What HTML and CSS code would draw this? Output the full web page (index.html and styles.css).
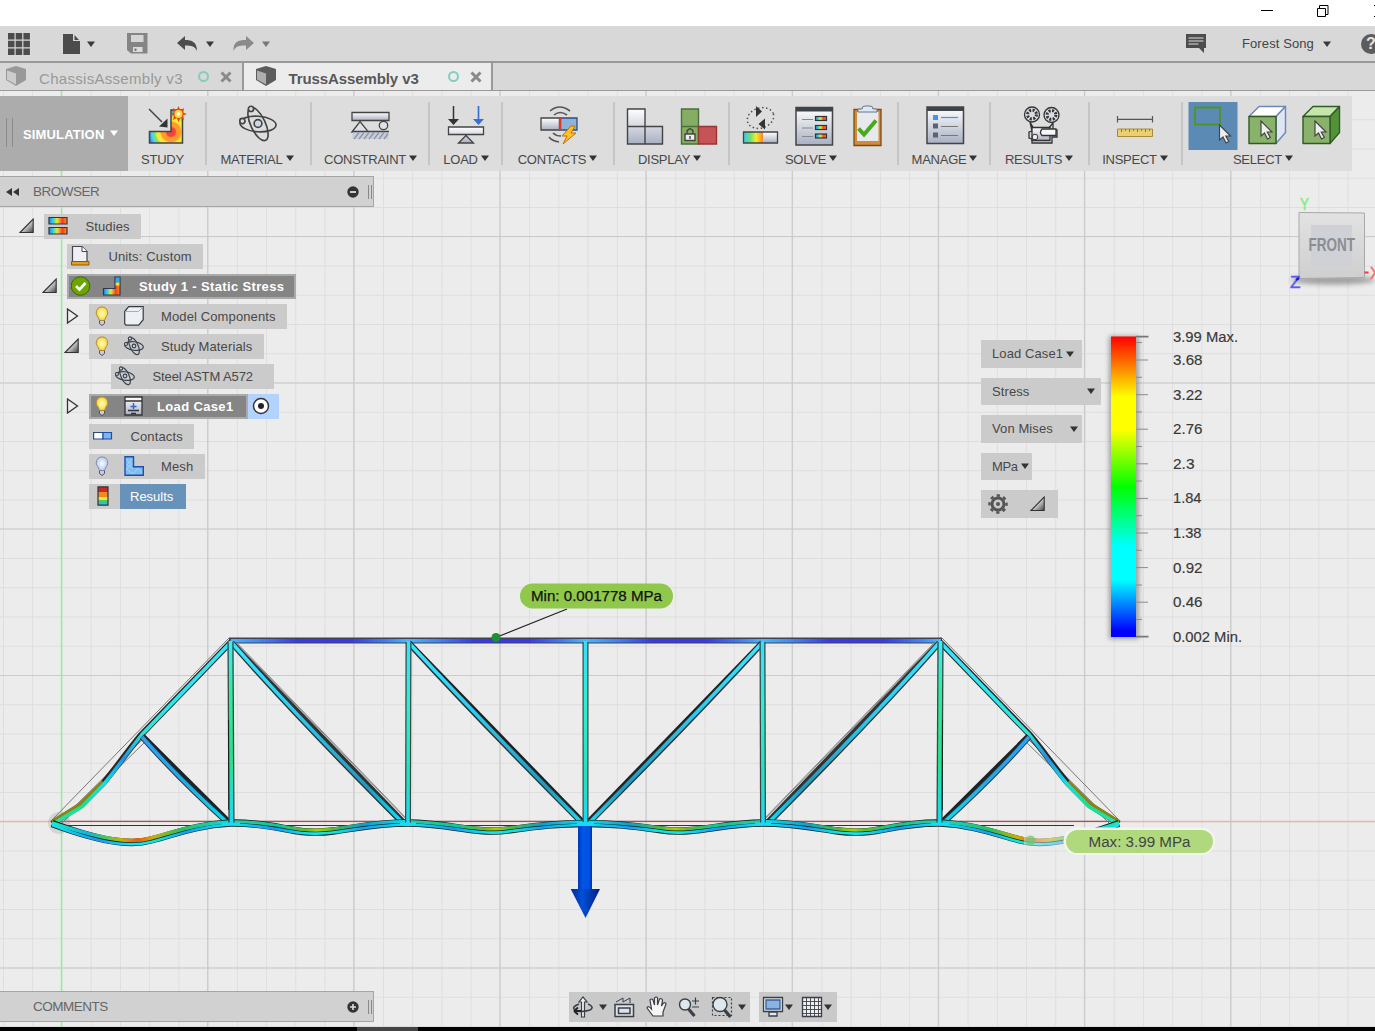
FILE: index.html
```html
<!DOCTYPE html>
<html lang="en">
<head>
<meta charset="utf-8">
<title>TrussAssembly v3</title>
<link rel="stylesheet" href="styles.css">
</head>
<body>
<svg class="defs" width="0" height="0">
  <defs>
    <linearGradient id="metal" x1="0" y1="0" x2="0" y2="1"><stop offset="0" stop-color="#fff"/><stop offset="1" stop-color="#a9b0c2"/></linearGradient>
    <linearGradient id="rainbow"><stop offset="0" stop-color="#28f"/><stop offset=".25" stop-color="#3fd8c0"/><stop offset=".45" stop-color="#e8e832"/><stop offset=".75" stop-color="#f53c28"/><stop offset="1" stop-color="#f90"/></linearGradient>
    <linearGradient id="spectrum"><stop offset="0" stop-color="#38c8f8"/><stop offset=".35" stop-color="#70e070"/><stop offset=".65" stop-color="#f4ec30"/><stop offset="1" stop-color="#ff8020"/></linearGradient>
    <linearGradient id="tri" x1="0" y1="0" x2="1" y2="1"><stop offset=".4" stop-color="#eee"/><stop offset="1" stop-color="#444"/></linearGradient>
    <radialGradient id="heat" gradientUnits="userSpaceOnUse" cx="170" cy="132" r="24"><stop offset=".18" stop-color="#f5433c"/><stop offset=".24" stop-color="#ff9a2c"/><stop offset=".4" stop-color="#ff9a2c"/><stop offset=".46" stop-color="#ffe033"/><stop offset=".58" stop-color="#f4ee30"/><stop offset=".68" stop-color="#7fe070"/><stop offset=".8" stop-color="#45d8f0"/><stop offset=".95" stop-color="#3c78f0"/></radialGradient>
    <radialGradient id="bulbOn"><stop offset="0" stop-color="#fffbd0"/><stop offset=".6" stop-color="#ffea68"/><stop offset="1" stop-color="#f0c838"/></radialGradient>
    <radialGradient id="bulbOff"><stop offset="0" stop-color="#fff"/><stop offset="1" stop-color="#b4c8ee"/></radialGradient>
    <symbol id="caret" viewBox="0 0 10 8"><path d="M1 1.5h8L5 7z" fill="currentColor"/></symbol>
    <symbol id="open" viewBox="0 0 16 16"><path d="M1 14.5L14.2 1v13.5z" fill="url(#tri)" stroke="#333" stroke-width="1.1"/></symbol>
    <symbol id="closed" viewBox="0 0 16 16"><path d="M3.5 1v14L13.500 8z" fill="#eee" stroke="#333" stroke-width="1.300"/></symbol>
    <symbol id="bulb" viewBox="0 0 20 20"><path d="M6.500 14.500h5v3l-2.500 2-2.500-2z" fill="#ccd" stroke="#445" stroke-width=".9"/><path d="M9 .800a5.900 5.900 0 0 1 4 10.200L11.500 14.500h-5L5 11A5.900 5.900 0 0 1 9 .800z" fill="url(#bulbOn)" stroke="#a88a3c" stroke-width=".9"/></symbol>
    <symbol id="bulb-off" viewBox="0 0 20 20"><path d="M6.500 14.500h5v3l-2.500 2-2.500-2z" fill="#ccd" stroke="#445" stroke-width=".9"/><path d="M9 .800a5.900 5.900 0 0 1 4 10.200L11.500 14.500h-5L5 11A5.900 5.900 0 0 1 9 .800z" fill="url(#bulbOff)" stroke="#7888b0" stroke-width=".9"/></symbol>
    <symbol id="atom" viewBox="0 0 40 40"><g fill="none" stroke="#444" stroke-width="1.700"><ellipse cx="20" cy="20" rx="18.500" ry="8" transform="rotate(4 20 20)"/><ellipse cx="20" cy="20" rx="18.500" ry="7.500" transform="rotate(65 20 20)"/><circle cx="20" cy="19.500" r="4" fill="#cfd6e4"/><circle cx="12.800" cy="4.500" r="2.700" fill="#ddd"/><circle cx="4" cy="17" r="2.700" fill="#ddd"/></g></symbol>
    <symbol id="atom-small" viewBox="0 0 20 20"><g fill="none" stroke="#3a4350" stroke-width="1.200"><ellipse cx="10" cy="10" rx="9.400" ry="4.300" transform="rotate(8 10 10)"/><ellipse cx="10" cy="10" rx="9.400" ry="4" transform="rotate(65 10 10)"/><circle cx="10" cy="10" r="1.800"/><circle cx="6" cy="2.500" r="1.600" fill="#ddd"/><circle cx="2" cy="8" r="1.500" fill="#ddd"/></g></symbol>
    <symbol id="cursor" viewBox="0 0 14 20"><path d="M1 1v15l3.500-3 3 6 2.800-1.500-3-5.500H12z" fill="#eee" stroke="#444" stroke-width="1.200"/></symbol>
    <symbol id="part" viewBox="0 0 20 20"><path d="M0 3L10 0l10 3v11l-10 6L0 14z" fill="currentColor"/><path d="M1 4.500l9 3v11l-9-5z" fill="#fff" opacity=".5"/></symbol>
    <symbol id="cross" viewBox="0 0 12 12"><path d="M1.500 1.500l9 9m0-9l-9 9" stroke="#8a8a8a" stroke-width="3"/></symbol>
  </defs>
</svg>

<div class="app">
  <header class="titlebar">
    <svg width="120" height="26" viewBox="1255 0 120 26" fill="none" stroke="#000"><path d="M1261 10.500h12M1317.500 8.500h8v8h-8zM1319.500 8V5.500h8.500v9h-2M1374.500 5v1M1374.500 16v1"/></svg>
  </header>

  <div class="quickbar">
    <svg width="22" height="22" viewBox="0 0 22 22" fill="#4c4c4c"><path d="M0 0h6.500v6.500H0zM7.700 0h6.500v6.500H7.700zM15.400 0h6.500v6.500h-6.500zM0 7.700h6.500v6.500H0zM7.700 7.700h6.500v6.500H7.700zM15.400 7.700h6.500v6.500h-6.500zM0 15.400h6.500v6.500H0zM7.700 15.400h6.500v6.500H7.700zM15.400 15.400h6.500v6.500h-6.500z"/></svg>
    <svg class="qb-file" width="17" height="20" viewBox="0 0 17 20" fill="#4c4c4c"><path d="M0 0h10v7h7v13H0z"/><path d="M11.500 1v5H16z"/></svg>
    <svg class="qb-caret" width="10" height="8"><use href="#caret"/></svg>
    <svg class="qb-save" width="21" height="21" viewBox="0 0 21 21"><path d="M0 0h20.500v20.500H4L0 17z" fill="#858585"/><path d="M4 2h12.500v7H4z" fill="#d5d5d5"/><path d="M6 14h9.500v5H6z" fill="#ddd"/><path d="M7.500 15.500h2v2.500h-2z" fill="#777"/></svg>
    <svg class="qb-undo" width="21" height="16" viewBox="0 0 21 16"><path d="M0 7l8-7v4c7 0 12 2 12 11-2-4.500-5-5.500-12-5.500V14z" fill="#4c4c4c"/></svg>
    <svg class="qb-caret" width="10" height="8"><use href="#caret"/></svg>
    <svg class="qb-redo" width="21" height="16" viewBox="0 0 21 16"><path d="M21 7l-8-7v4C5 4 0 6 .500 15c2-4.500 5-5.500 12.500-5.500V14z" fill="#8a8a8a"/></svg>
    <svg class="qb-caret dim" width="10" height="8"><use href="#caret"/></svg>
    <svg class="qb-chat" width="20" height="19" viewBox="0 0 20 19"><path d="M0 0h20v14h-2v5l-5-5H0z" fill="#4c4c4c"/><path d="M2.500 4h15M2.500 7h15M2.500 10h10" stroke="#ddd"/></svg>
    <span class="user">Forest Song</span>
    <svg class="qb-caret" width="10" height="8"><use href="#caret"/></svg>
    <span class="help">?</span>
  </div>

  <nav class="tabs">
    <div class="tab">
      <svg class="tab-part" width="20" height="20"><use href="#part"/></svg><span class="tab-name">ChassisAssembly v3</span><i class="ring"></i><svg width="12" height="12"><use href="#cross"/></svg>
    </div>
    <div class="tab active">
      <svg class="tab-part" width="20" height="20"><use href="#part"/></svg><span class="tab-name">TrussAssembly v3</span><i class="ring"></i><svg width="12" height="12"><use href="#cross"/></svg>
    </div>
  </nav>

  <main class="stage">
    <svg class="scene" width="1375" height="936" viewBox="0 91 1375 936">
      <defs>
        <pattern id="minor" patternUnits="userSpaceOnUse" x="3" y="90" width="29.230" height="29.250"><path d="M.5 0v30M0 .5h30" stroke="#dedede" fill="none"/></pattern>
        <linearGradient id="chord" gradientUnits="userSpaceOnUse" x1="230" y1="0" x2="407.500" y2="0" spreadMethod="repeat"><stop offset="0" stop-color="#48b8ff"/><stop offset=".15" stop-color="#418cf8"/><stop offset=".38" stop-color="#3838ee"/><stop offset=".68" stop-color="#3838ee"/><stop offset=".9" stop-color="#4088f8"/><stop offset="1" stop-color="#48b8ff"/></linearGradient>
        <linearGradient id="post" gradientUnits="userSpaceOnUse" x1="0" y1="640" x2="0" y2="824"><stop offset="0" stop-color="#35dfff"/><stop offset=".35" stop-color="#2cf0d0"/><stop offset=".75" stop-color="#25e0c0"/><stop offset="1" stop-color="#18dcf8"/></linearGradient>
        <linearGradient id="postEnd" gradientUnits="userSpaceOnUse" x1="0" y1="640" x2="0" y2="824"><stop offset="0" stop-color="#35efff"/><stop offset=".3" stop-color="#2aef98"/><stop offset=".65" stop-color="#2be090"/><stop offset="1" stop-color="#18dcf8"/></linearGradient>
        <linearGradient id="diag" gradientUnits="userSpaceOnUse" x1="0" y1="640" x2="0" y2="824"><stop offset="0" stop-color="#3ae8ff"/><stop offset=".4" stop-color="#2fc9ee"/><stop offset=".8" stop-color="#2597b8"/><stop offset="1" stop-color="#14e0f8"/></linearGradient>
        <linearGradient id="rafter" gradientUnits="userSpaceOnUse" x1="0" y1="640" x2="0" y2="824"><stop offset="0" stop-color="#35e4ff"/><stop offset=".5" stop-color="#27e8dc"/><stop offset=".64" stop-color="#2490e0"/><stop offset=".78" stop-color="#10e0e8"/><stop offset=".9" stop-color="#1ade90"/><stop offset="1" stop-color="#20e8b0"/></linearGradient>
        <linearGradient id="brace" gradientUnits="userSpaceOnUse" x1="0" y1="736" x2="0" y2="824"><stop offset="0" stop-color="#2fa0f8"/><stop offset=".5" stop-color="#23a7e8"/><stop offset="1" stop-color="#14d9e8"/></linearGradient>
        <linearGradient id="hot" gradientUnits="userSpaceOnUse" x1="52" y1="0" x2="230" y2="0"><stop offset="0" stop-color="#20e8c0"/><stop offset=".2" stop-color="#10b8d8"/><stop offset=".3" stop-color="#40c860"/><stop offset=".39" stop-color="#c8b000"/><stop offset=".48" stop-color="#f05a10"/><stop offset=".57" stop-color="#c8b000"/><stop offset=".72" stop-color="#28c060"/><stop offset="1" stop-color="#10d8d0"/></linearGradient>
        <linearGradient id="warm" gradientUnits="userSpaceOnUse" x1="230" y1="0" x2="407.500" y2="0" spreadMethod="repeat"><stop offset="0" stop-color="#30c8a0"/><stop offset=".28" stop-color="#10c890"/><stop offset=".42" stop-color="#60b830"/><stop offset=".5" stop-color="#a8d000"/><stop offset=".58" stop-color="#50b840"/><stop offset=".75" stop-color="#10a0c8"/><stop offset="1" stop-color="#18d8e8"/></linearGradient>
        <linearGradient id="cool" gradientUnits="userSpaceOnUse" x1="52" y1="0" x2="230" y2="0" spreadMethod="repeat"><stop offset="0" stop-color="#10e8f0"/><stop offset=".25" stop-color="#1898f0"/><stop offset=".45" stop-color="#10e8f0"/><stop offset=".6" stop-color="#10e0e0"/><stop offset=".75" stop-color="#18a0f0"/><stop offset="1" stop-color="#10e0f0"/></linearGradient>
        <linearGradient id="scale" x1="0" y1="0" x2="0" y2="1"><stop offset="0" stop-color="#f00"/><stop offset=".2" stop-color="#ff0"/><stop offset=".31" stop-color="#ff0"/><stop offset=".5" stop-color="#0f0"/><stop offset=".7" stop-color="#0ff"/><stop offset=".81" stop-color="#0ff"/><stop offset=".98" stop-color="#00f"/></linearGradient>
        <linearGradient id="shaft"><stop offset="0" stop-color="#0038b8"/><stop offset=".35" stop-color="#0058e8"/><stop offset=".8" stop-color="#0050e0"/><stop offset="1" stop-color="#0030a8"/></linearGradient>
        <linearGradient id="head"><stop offset="0" stop-color="#002c98"/><stop offset=".4" stop-color="#0050d8"/><stop offset="1" stop-color="#001c80"/></linearGradient>
        <linearGradient id="cubeFace" x1="0" y1="0" x2="0" y2="1"><stop offset="0" stop-color="#e2e2e3"/><stop offset="1" stop-color="#cfcfcf"/></linearGradient>
        <filter id="soft" x="-50%" y="-50%" width="200%" height="200%"><feGaussianBlur stdDeviation="2.500"/></filter>
      </defs>
      <rect y="91" width="1375" height="936" fill="#ececec"/>
      <rect y="91" width="1375" height="936" fill="url(#minor)"/>
      <path d="M207.700 91v936M353.800 91v936M500 91v936M646 91v936M792.200 91v936M938.400 91v936M1084.500 91v936M1230.700 91v936M0 236.500h1375M0 383h1375M0 529h1375M0 675.500h1375M0 968h1375" stroke="#cacaca" stroke-width="1.200" fill="none"/>
      <path d="M61.500 91v936" stroke="#92f292" stroke-width="1.500"/>
      <path d="M0 821.500h1375" stroke="#f2b0b0" stroke-width="1.500"/>

      <g fill="none">
        <path d="M55 821.300h1062" stroke="#806464" stroke-width="1.300"/>
        <path d="M55 825.500h1019" stroke="#333"/>
        <circle cx="59" cy="823" r="11" fill="#999" opacity=".28"/><circle cx="62" cy="822" r="8" fill="#999" opacity=".2"/>
        <path d="M229 640.500h713" stroke="#3f4450" stroke-width="6"/>
        <path d="M231 640.700h710" stroke="url(#chord)" stroke-width="3.600"/>
        <g id="half">
          <path d="M51 821L229 638M57 824l87-86M61 824l86-84" stroke="#777"/>
          <path d="M234 641l174 180M238 644l170 176" stroke="#888"/>
          <path d="M231.500 641.500L141 735C127 752 116 768 103 783.500L81 805.500 52 823.500" stroke="#262626" stroke-width="6"/>
          <path d="M103 782L80 804.500 52 822" stroke="#8a8418" stroke-width="4"/>
          <path d="M231.500 641.500L141.500 735C128 752 117 768 104 784L82 806.500 53 824" stroke="url(#rafter)" stroke-width="3.600"/>
          <path d="M142.500 736l86.500 86" stroke="#1d2228" stroke-width="5.400"/>
          <path d="M142 737q38 43 87 87" stroke="#20383e" stroke-width="5.500"/>
          <path d="M142 737q37 42 87 87" stroke="url(#brace)" stroke-width="3.500"/>
          <path d="M232 642.500L405 823" stroke="#333" stroke-width="4.600"/>
          <path d="M232 643.500Q300 720.500 404 824.500" stroke="#243338" stroke-width="5.600"/>
          <path d="M232 643Q300 720 404 824" stroke="url(#diag)" stroke-width="3.500"/>
          <path d="M409 642.500L584 823" stroke="#202020" stroke-width="5"/>
          <path d="M409 643.500Q485 726 583 824" stroke="#243338" stroke-width="5.600"/>
          <path d="M409 643Q485.500 725.500 583 824" stroke="url(#diag)" stroke-width="3.500"/>
          <path d="M52 823.500C75 832 96 839 118 841.500Q137 844 151 840C175 834 195 825 230 823C260 822 283 829 302 831.500Q318 833 333 831C356 828 377 823 408 823C438 823 460 829 480 830.500Q497 832 512 829.500C538 826 556 823.500 585.500 823.500" stroke="#122426" stroke-width="7.400"/>
          <path d="M52 823C75 830 96 837 118 839.500Q137 842 151 838C175 832 195 823 230 822" stroke="url(#hot)" stroke-width="3.600"/>
          <path d="M230 822C260 820.500 283 827 302 829.500Q318 831 333 829C356 826 377 821 408 821.500C438 822 460 827 480 828.500Q497 830 512 827.500C538 824 556 822 585.500 822" stroke="url(#warm)" stroke-width="3"/>
          <path d="M52 825C75 834 96 841 118 843.500Q137 845.500 151 842C175 836 195 827 230 824.500C260 824 283 831 302 833Q318 834.500 333 832.500C356 829.500 377 825 408 824.500C438 825 460 830.500 480 832Q497 833.500 512 831C538 828 556 825 585.500 825" stroke="url(#cool)" stroke-width="2.700"/>
          <path d="M230.500 642L231.500 824" stroke="#3a4545" stroke-width="6.200"/><path d="M228.800 720v90" stroke="#111"/>
          <path d="M230.500 641L231.500 825" stroke="url(#postEnd)" stroke-width="3.600"/>
          <path d="M408.500 642l-.5 182" stroke="#3a4545" stroke-width="6"/>
          <path d="M408.500 641l-.5 184" stroke="url(#post)" stroke-width="3.500"/>
          <path d="M222 824h18M400 824h16" stroke="#14dcf4" stroke-width="3"/>
        </g>
        <use href="#half" transform="translate(1171 0) scale(-1 1)"/>
        <path d="M585.500 642v182" stroke="#3a4545" stroke-width="6"/>
        <path d="M585.500 641v185" stroke="url(#post)" stroke-width="3.600"/>
        <path d="M577 824h17" stroke="#14dcf4" stroke-width="4"/>
      </g>
      <path d="M578 826h14v63h-14z" fill="url(#shaft)"/>
      <path d="M570.700 889h29.300L585.500 918z" fill="url(#head)"/>
      <path d="M497 637l70-28" stroke="#222" stroke-width="1.200"/>
      <circle cx="496" cy="637.500" r="4.500" fill="#1d8f35"/>
      <rect x="520" y="583.500" width="153" height="25" rx="12.500" fill="#8fc84a"/>
      <text x="531" y="601" font-size="15.500" textLength="131" lengthAdjust="spacingAndGlyphs" fill="#111" stroke="#111" stroke-width=".25">Min: 0.001778 MPa</text>
      <path d="M1024 834h48v14h-48z" fill="#ececec" opacity=".45"/>
      <circle cx="1030.500" cy="840.500" r="5" fill="#6cc46c" opacity=".7"/>
      <rect x="1063.500" y="827.500" width="151.500" height="27.500" rx="13.500" fill="#f3f6ef"/>
      <rect x="1066" y="830" width="147" height="23" rx="11.500" fill="#b0d97d"/>
      <text x="1088.500" y="847" font-size="15.500" textLength="102" lengthAdjust="spacingAndGlyphs" fill="#444">Max: 3.99 MPa</text>

      <rect x="1109" y="336" width="30" height="303" fill="#777" opacity=".65" filter="url(#soft)"/>
      <rect x="1111" y="336.500" width="25" height="300.500" fill="url(#scale)"/>
      <path d="M1136 336.700h12.500M1136 636.700h12.500" stroke="#777" stroke-width="1.800"/>
      <path d="M1136 360h12M1136 394.700h12M1136 429.200h12M1136 463.800h12M1136 498.400h12M1136 533h12M1136 567.600h12M1136 602.200h12M1136 342.500h6M1136 377.300h6M1136 412h6M1136 446.500h6M1136 481h6M1136 515.700h6M1136 550.300h6M1136 585h6M1136 619.500h6" stroke="#8c8c8c"/>
      <g font-size="14.800" fill="#383838" stroke="#383838" stroke-width=".15">
        <text x="1173" y="342" textLength="65" lengthAdjust="spacingAndGlyphs">3.99 Max.</text><text x="1173" y="365.200" textLength="29.500" lengthAdjust="spacingAndGlyphs">3.68</text><text x="1173" y="399.600" textLength="29.500" lengthAdjust="spacingAndGlyphs">3.22</text><text x="1173" y="434.200" textLength="29.500" lengthAdjust="spacingAndGlyphs">2.76</text><text x="1173" y="468.800" textLength="21.500" lengthAdjust="spacingAndGlyphs">2.3</text><text x="1173" y="503.400" textLength="28.500" lengthAdjust="spacingAndGlyphs">1.84</text><text x="1173" y="538" textLength="28.500" lengthAdjust="spacingAndGlyphs">1.38</text><text x="1173" y="572.600" textLength="29.500" lengthAdjust="spacingAndGlyphs">0.92</text><text x="1173" y="607.200" textLength="29.500" lengthAdjust="spacingAndGlyphs">0.46</text><text x="1173" y="641.800" textLength="69" lengthAdjust="spacingAndGlyphs">0.002 Min.</text>
      </g>

      <ellipse cx="1333" cy="280" rx="42" ry="4.500" fill="#777" opacity=".65" filter="url(#soft)"/>
      <path d="M1299 212.500l65.500.500v64.500l-65.500 1z" fill="url(#cubeFace)" stroke="#a9a9ab"/>
      <path d="M1311 225h41v41h-41z" fill="#cfd1d6"/>
      <text x="1308.500" y="251.300" font-size="17.500" font-weight="bold" textLength="46.500" lengthAdjust="spacingAndGlyphs" fill="#8a8d93">FRONT</text>
      <g font-size="17" stroke-width=".5">
        <text x="1300" y="209.500" textLength="9" lengthAdjust="spacingAndGlyphs" fill="#80f080" stroke="#80f080">Y</text>
        <text x="1290" y="288" textLength="10.500" lengthAdjust="spacingAndGlyphs" fill="#5c5cf0" stroke="#5c5cf0">Z</text>
        <text x="1370" y="279" textLength="10" lengthAdjust="spacingAndGlyphs" fill="#ff6a6a" stroke="#ff6a6a">X</text>
      </g>
      <path d="M1296 280l3-2" stroke="#22c" stroke-width="2.500"/>
      <path d="M1364.500 272.500h4" stroke="#f33" stroke-width="2"/>
    </svg>

    <div class="ui">
      <div class="toolbar">
        <div class="workspace"><i class="grip"></i><span>SIMULATION</span><svg width="10" height="8"><use href="#caret"/></svg></div>

        <div class="group study">
          <svg width="46" height="48" viewBox="143 102 46 48"><path d="M148.500 131.500H170V110h11.500v33h-33z" fill="url(#heat)" stroke="#444" stroke-width="1.500"/><path d="M148 109l13 13" stroke="#444" stroke-width="1.500"/><path d="M166.500 127.500v-9l-8.500 8z" fill="#333"/><path d="M177.500 106l1.800 4 4-2-1.500 4.300 4 1.700-4 1.700 1.500 4.300-4-2-1.800 4-1.800-4-4 2 1.500-4.300-4-1.700 4-1.700-1.500-4.300 4 2z" fill="#e84a10"/><circle cx="177.500" cy="114" r="4" fill="#ffd93c"/><circle cx="177.500" cy="114" r="1.800" fill="#fff"/></svg>
          <span class="label">STUDY</span>
        </div>
        <div class="group material">
          <svg width="44" height="48" viewBox="-1 -1 44 48"><use href="#atom" x="1.500" y="1.500" width="39" height="39"/></svg>
          <span class="label">MATERIAL<svg width="10" height="8"><use href="#caret"/></svg></span>
        </div>
        <div class="group constraint">
          <svg width="46" height="48" viewBox="348 102 46 48" stroke="#444" stroke-width="1.300"><path d="M352 112.500h37v8h-37z" fill="url(#metal)"/><path d="M352 132l8-10.500 8.500 10.500z" fill="#dce0e8"/><circle cx="383.500" cy="125.500" r="4.200" fill="#dce0e8"/><path d="M352.500 132h36v7h-36z" fill="#c9cedb" stroke="none"/><path d="M352 131.500h37" /><path d="M354 139l5-6.500M359 139l5-6.500M364 139l5-6.500M369 139l5-6.500M374 139l5-6.500M379 139l5-6.500M384 139l4-5.500" stroke="#8f95a3"/></svg>
          <span class="label">CONSTRAINT<svg width="10" height="8"><use href="#caret"/></svg></span>
        </div>
        <div class="group load">
          <svg width="46" height="48" viewBox="444 102 46 48"><path d="M453.500 106v14" stroke="#333" stroke-width="1.500"/><path d="M448 119h11l-5.500 6z" fill="#333"/><path d="M478.500 106v14" stroke="#3a6fd0" stroke-width="1.700"/><path d="M473 119h11l-5.500 6z" fill="#3a6fd0"/><path d="M448.500 127h35v7.500h-35zM466 135.500l7.500 7.500h-15z" fill="url(#metal)" stroke="#444" stroke-width="1.300"/></svg>
          <span class="label">LOAD<svg width="10" height="8"><use href="#caret"/></svg></span>
        </div>
        <div class="group contacts">
          <svg width="46" height="48" viewBox="535 102 46 48" fill="none"><g stroke="#555" stroke-width="1.600"><path d="M550 111q9.500-8 20 0M554 115q6-5 13 0M549 137q3 4 10 5M553 133q3 3 8 3"/></g><path d="M541 118h18.500v12H541z" fill="url(#metal)" stroke="#444" stroke-width="1.300"/><path d="M560.500 118H577v12h-16.500z" fill="#8fb2dc" stroke="#2c4f80" stroke-width="1.300"/><path d="M560 118v12" stroke="#d83a20" stroke-width="2.200"/><path d="M571 126l-9 10h5l-4 8 13-11h-5l4-7z" fill="#ffc02a" stroke="#c07000"/></svg>
          <span class="label">CONTACTS<svg width="10" height="8"><use href="#caret"/></svg></span>
        </div>
        <div class="group display">
          <svg width="96" height="48" viewBox="624 102 96 48" stroke-width="1.400"><path d="M627.500 109h17.500v17.500h-17.500zM627.500 126.500h17.500V144h-17.500zM645 126.500h17.500V144H645z" fill="url(#metal)" stroke="#444"/><path d="M681.500 109h17v17.500h-17zM681.500 126.500h17V144h-17z" fill="#86ae62" stroke="#48703a"/><path d="M698.500 126.500h18V144h-18z" fill="#c65356" stroke="#963636"/><path d="M685 134h10v6.500h-10z" fill="#eee" stroke="#444"/><path d="M687 133.500v-2.500q3-4.500 6 0v2.500M690 136v3" fill="none" stroke="#444"/></svg>
          <span class="label">DISPLAY<svg width="10" height="8"><use href="#caret"/></svg></span>
        </div>
        <div class="group solve">
          <svg width="144" height="48" viewBox="740 102 144 48"><path d="M743.500 132h34v11h-34z" fill="url(#metal)"/><path d="M743.500 132H763v11h-19.500z" fill="url(#spectrum)"/><path d="M743.500 132h34v11h-34z" fill="none" stroke="#444" stroke-width="1.300"/><ellipse cx="760.500" cy="118" rx="13.500" ry="10" transform="rotate(-18 760.500 118)" fill="none" stroke="#555" stroke-width="1.500" stroke-dasharray="1.500 2.500"/><path d="M756 106v11l6-5.500zM765 118.500v11l-6.500-5.500z" fill="#333"/>
          <path d="M796 107.500h36.500V145H796z" fill="url(#metal)" stroke="#444" stroke-width="1.500"/><path d="M796 107.500h36.500v4H796z" fill="#3f434a"/><path d="M802 119.500h11M802 128h11M802 136.500h11" stroke="#888"/><g fill="url(#rainbow)" stroke="#333" stroke-width="1.200"><rect x="815.500" y="116.500" width="11" height="4"/><rect x="815.500" y="125.500" width="11" height="4"/><rect x="815.500" y="134" width="11" height="4"/></g>
          <path d="M854 109.500h27V145.500h-27z" fill="#d08c38" stroke="#7a4c18" stroke-width="1.300"/><path d="M857 112h21.500v29H857z" fill="#e7e9ec"/><path d="M858 112v-3h4q0-3 3-3h5q3 0 3 3h4v3z" fill="#dde8f4" stroke="#63788e"/><path d="M858.500 128.500l5.500 6L876 120.500" fill="none" stroke="#45aa1c" stroke-width="4"/></svg>
          <span class="label">SOLVE<svg width="10" height="8"><use href="#caret"/></svg></span>
        </div>
        <div class="group manage">
          <svg width="46" height="48" viewBox="921 102 46 48"><path d="M926 107h36.500v36.500H926z" fill="url(#metal)" stroke="#444" stroke-width="1.500"/><path d="M926 107h36.500v4H926z" fill="#3f434a"/><path d="M932 115h5v5h-5z" fill="#4a90f0"/><path d="M932 123.500h5v5h-5zM932 132.500h5v5h-5z" fill="#5c6370"/><path d="M940 117.500h17" stroke="#4a90f0" stroke-width="1.200"/><path d="M940 126.500h17M940 135.500h17" stroke="#777" stroke-width="1.200"/></svg>
          <span class="label">MANAGE<svg width="10" height="8"><use href="#caret"/></svg></span>
        </div>
        <div class="group results">
          <svg width="46" height="48" viewBox="1018 102 46 48"><g stroke="#333" stroke-width="1.300" fill="#d8dbe2"><path d="M1029 122l4 7h14l5-6v8l4-1v7h-5v6h-20v-4l-3-1v-6l3-1z"/><circle cx="1031" cy="114.500" r="7.500"/><circle cx="1050.500" cy="115" r="7.500"/></g><circle cx="1031" cy="114.500" r="4.400" fill="none" stroke="#333" stroke-width="3" stroke-dasharray="2 1.460"/><circle cx="1050.500" cy="115" r="4.400" fill="none" stroke="#333" stroke-width="3" stroke-dasharray="2 1.460"/><path d="M1031 127.500h18v13h-18z" fill="url(#metal)" stroke="#333" stroke-width="1.300"/><path d="M1041 129h14v6.500h-14q-3-3 0-6.500z" fill="#f5f6f8" stroke="#333" stroke-width="1.300"/><circle cx="1034" cy="137" r="2.800" fill="#eee" stroke="#333"/></svg>
          <span class="label">RESULTS<svg width="10" height="8"><use href="#caret"/></svg></span>
        </div>
        <div class="group inspect">
          <svg width="46" height="48" viewBox="1113 102 46 48"><path d="M1117.500 116v6.500M1152.500 116v6.500M1117 119.300h36" stroke="#555" stroke-width="1.200"/><path d="M1117.500 129h35v7.500h-35z" fill="#ecd070" stroke="#a88940"/><path d="M1121.500 129v3M1125.500 129v2M1129.500 129v3M1133.500 129v2M1137.500 129v3M1141.500 129v2M1145.500 129v3M1149.500 129v2" stroke="#947530"/></svg>
          <span class="label">INSPECT<svg width="10" height="8"><use href="#caret"/></svg></span>
        </div>
        <div class="group select">
          <svg width="156" height="48" viewBox="1188 102 156 48"><path d="M1188.500 102h49v48h-49z" fill="#5b8bb5"/><path d="M1195 107.500h25v17h-25z" fill="none" stroke="#4f9428" stroke-width="1.800"/><use href="#cursor" x="1218.500" y="124" width="14" height="20"/>
          <g stroke-width="1.400" stroke-linejoin="round"><path d="M1249 116.500l10-10h26.500l-9.500 10z" fill="#fff" stroke="#6a87b8"/><path d="M1276 116.500l9.500-10v26l-9.500 11z" fill="#dfe5f2" stroke="#6a87b8"/><path d="M1249 116.500h27v27h-27z" fill="#89b36a" stroke="#315a26"/><path d="M1303 116.500l10-10h26.500l-9.500 10z" fill="#c4e6ab" stroke="#315a26"/><path d="M1330 116.500l9.500-10v26l-9.500 11z" fill="#529339" stroke="#315a26"/><path d="M1303 116.500h27v27h-27z" fill="#89b36a" stroke="#315a26"/></g><use href="#cursor" x="1260" y="120" width="14" height="20"/><use href="#cursor" x="1314" y="120" width="14" height="20"/></svg>
          <span class="label">SELECT<svg width="10" height="8"><use href="#caret"/></svg></span>
        </div>
      </div>

      <div class="middle">
        <aside class="browser">
          <div class="panel-head">
            <svg class="collapse" width="14" height="8" viewBox="0 0 14 8"><path d="M0 4l6-4v8zM7 4l6-4v8z" fill="#333"/></svg>
            <span>BROWSER</span>
            <svg class="badge" width="12" height="12" viewBox="0 0 12 12"><circle cx="6" cy="6" r="5.700" fill="#333"/><path d="M3 6h6" stroke="#ddd" stroke-width="1.800"/></svg><i class="handle"></i>
          </div>
          <ul class="tree">
            <li class="l0"><span class="toggle"><svg width="16" height="16"><use href="#open"/></svg></span>
              <span class="chip"><svg width="20" height="20" viewBox="0 0 20 20"><path d="M1 1.500h18v6.500H1zM1 11.500h18V18H1z" fill="url(#rainbow)" stroke="#334" stroke-width="1.200"/></svg><b>Studies</b></span></li>
            <li class="l1"><span class="toggle"></span>
              <span class="chip"><svg width="20" height="20" viewBox="0 0 20 20"><path d="M1.500.500h9.500l5 5v11h-14.500z" fill="#eef0f4" stroke="#445" stroke-width="1.200"/><path d="M11 .500v5h5" fill="#fff" stroke="#445"/><path d="M.500 15.500h17.500v3.500H.500z" fill="#e0a020" stroke="#8a5a00"/></svg><b>Units: Custom</b></span></li>
            <li class="l1"><span class="toggle"><svg width="16" height="16"><use href="#open"/></svg></span>
              <span class="chip dark"><svg width="20" height="20" viewBox="0 0 20 20"><circle cx="9.500" cy="10" r="9.300" fill="#6aa500" stroke="#3f6500"/><path d="M5 10l3.500 3.500L14.500 7" fill="none" stroke="#fff" stroke-width="2.600"/></svg><svg width="20" height="20" viewBox="0 0 20 20"><path d="M1.500 12.500H13V1h5v18H1.500z" fill="url(#rainbow)" stroke="#335" stroke-width="1.200"/><path d="M13.600 1.600h3.800v5h-3.800z" fill="#28a8f0"/><path d="M13.600 6.600h3.800v3h-3.800z" fill="#e8e040"/></svg><b>Study 1 - Static Stress</b></span></li>
            <li class="l2"><span class="toggle"><svg width="16" height="16"><use href="#closed"/></svg></span>
              <span class="chip"><svg width="20" height="20"><use href="#bulb"/></svg><svg width="20" height="20" viewBox="0 0 20 20"><path d="M.700 5.500l4-4.800h14.500v13l-4.500 5.500H2l-1.300-1.500z" fill="#eef0f4" stroke="#333c48" stroke-width="1.200"/><path d="M1 5.500h13.500L19 1" fill="none" stroke="#aab"/></svg><b>Model Components</b></span></li>
            <li class="l2"><span class="toggle"><svg width="16" height="16"><use href="#open"/></svg></span>
              <span class="chip"><svg width="20" height="20"><use href="#bulb"/></svg><svg width="20" height="20"><use href="#atom-small"/></svg><b>Study Materials</b></span></li>
            <li class="l3"><span class="toggle"></span>
              <span class="chip material-chip"><svg width="20" height="20"><use href="#atom-small"/></svg><b>Steel ASTM A572</b></span></li>
            <li class="l2"><span class="toggle"><svg width="16" height="16"><use href="#closed"/></svg></span>
              <span class="chip dark case"><svg width="20" height="20"><use href="#bulb"/></svg><svg width="20" height="20" viewBox="0 0 20 20"><path d="M1 1h17v18H1z" fill="url(#metal)" stroke="#333" stroke-width="1.300"/><path d="M1 5h17" stroke="#333" stroke-width="1.500"/><path d="M9.500 7v6M6.500 10.500h6" stroke="#2868d0" stroke-width="1.400"/><path d="M4 14.500h11M7 17.500h5" stroke="#333" stroke-width="1.500"/></svg><b>Load Case1</b></span><span class="radio"><svg width="18" height="18" viewBox="0 0 18 18"><circle cx="9" cy="9" r="7.500" fill="#fff" stroke="#333" stroke-width="1.500"/><circle cx="9" cy="9" r="3" fill="#222"/></svg></span></li>
            <li class="l2"><span class="toggle"></span>
              <span class="chip"><svg width="20" height="20" viewBox="0 0 20 20"><path d="M.600 6.500h9.500v6.500H.600z" fill="#fff" stroke="#2a4a80" stroke-width="1.200"/><path d="M10 6.500h8.500v6.500H10z" fill="#7fb2ee" stroke="#1c4fb0" stroke-width="1.200"/></svg><b>Contacts</b></span></li>
            <li class="l2"><span class="toggle"></span>
              <span class="chip"><svg width="20" height="20"><use href="#bulb-off"/></svg><svg width="20" height="20" viewBox="0 0 20 20"><path d="M1 .700h8.500v10h9.800v8.500H1z" fill="#7fbcf0" stroke="#1c4fb0" stroke-width="1.400"/><path d="M2 3l6 5-6 5 7 5 5-6 4 5M8 3L3 9l6 4" fill="none" stroke="#a9d3f6"/></svg><b>Mesh</b></span></li>
            <li class="l2"><span class="toggle"></span>
              <span class="chip result-icon"><svg width="20" height="20" viewBox="0 0 20 20"><path d="M5 1h10v5H5z" fill="#c82828"/><path d="M5 6h10v5H5z" fill="#ee8a20"/><path d="M5 11h10v3H5z" fill="#e8e838"/><path d="M5 14h10v3H5z" fill="#40d060"/><path d="M5 16.500h10V19H5z" fill="#30b8f0"/><path d="M5 .800h10v18.400H5z" fill="none" stroke="#333" stroke-width="1.200"/></svg></span><span class="chip result">Results</span></li>
          </ul>
        </aside>

        <div class="plot-controls">
          <button class="w101">Load Case1<svg width="10" height="8"><use href="#caret"/></svg></button>
          <button class="w120">Stress<svg width="10" height="8"><use href="#caret"/></svg></button>
          <button class="w101">Von Mises<svg width="10" height="8"><use href="#caret"/></svg></button>
          <button class="w51">MPa<svg width="10" height="8"><use href="#caret"/></svg></button>
          <div class="plot-tools"><svg width="20" height="20" viewBox="0 0 20 20"><circle cx="10" cy="10" r="6" fill="none" stroke="#555" stroke-width="3"/><circle cx="10" cy="10" r="8.500" fill="none" stroke="#555" stroke-width="2.500" stroke-dasharray="3.300 3.376" stroke-dashoffset="1.600"/><circle cx="10" cy="10" r="2" fill="#555"/></svg><svg width="16" height="16"><use href="#open"/></svg></div>
        </div>
      </div>

      <div class="bottom">
        <div class="panel-head comments"><span>COMMENTS</span><svg class="badge" width="12" height="12" viewBox="0 0 12 12"><circle cx="6" cy="6" r="5.700" fill="#333"/><path d="M3 6h6M6 3v6" stroke="#ddd" stroke-width="1.600"/></svg><i class="handle"></i></div>
        <svg class="nav" width="181" height="30" viewBox="569 992 181 30" fill="none" stroke="#3a3f48" stroke-width="1.200"><path d="M581.500 1017v-15h-2.500l4-5 4 5H584.500v15z" fill="#eee"/><path d="M579 1004q-8 3-4 6 5 3 15 0 5-3-2-6" stroke-width="1.500"/><path d="M574 1011h7m-7 0l4-3.500m-4 3.500l4 3.500" stroke="#222" stroke-width="1.800"/><path d="M599 1004.500h8l-4 5.500z" fill="#333" stroke="none"/>
          <path d="M615 1004.500h18.500v12H615zM618.500 1008h11.500v5.500h-11.500z" fill="#dfe2e8" stroke-width="1.500"/><path d="M616 1002l7-4v4l7-4v5" stroke-width="1"/>
          <path d="M653 1016l-6-8q1-3 4.500 1l-1.500-9q2-2 3 0l1.500 5v-7q2-2 3 0v7l2-6q2-1 3 1l-1 6 2-3q2-1 2.500 1l-3 8v4z" fill="#f6f6f6"/>
          <circle cx="685" cy="1004.500" r="5.500" fill="#dce8ec" stroke-width="1.400"/><path d="M688.500 1009l6 7" stroke-width="3.200"/><path d="M692 1001h7M695.500 997.500v7M692 1007h7"/>
          <path d="M712.500 997.500h19v18h-19z" stroke-dasharray="2 2"/><circle cx="720" cy="1004.500" r="7" fill="#dce8ec" stroke-width="1.400"/><path d="M724.500 1010l6 7" stroke-width="3.200"/><path d="M738 1004.500h8l-4 5.500z" fill="#333" stroke="none"/></svg>
        <svg class="nav second" width="78" height="30" viewBox="759 992 78 30" fill="none" stroke="#3a3f48" stroke-width="1.300"><path d="M763.500 997.500h19v14h-19zM769 1012h8v4h-8z" fill="#e8e8e8"/><path d="M766 1000h14v9h-14z" fill="#8ab3e4" stroke="#35619c"/><path d="M785 1004.500h8l-4 5.500z" fill="#333" stroke="none"/><path d="M802.500 997.500h19v19h-19z" fill="#eee"/><path d="M806.500 997.500v19M810.500 997.500v19M814.500 997.500v19M818.500 997.500v19M802.500 1001.500h19M802.500 1005.500h19M802.500 1009.500h19M802.500 1013.500h19" stroke-width=".9"/><path d="M824 1004.500h8l-4 5.500z" fill="#333" stroke="none"/></svg>
      </div>
    </div>
  </main>
  <footer class="edge"><i></i></footer>
</div>
</body>
</html>
```
FILE: styles.css
```css
* { box-sizing: border-box; }
body { margin: 0; overflow: hidden; background: #fff; color: #484848; font: 13px "Liberation Sans", Arial, sans-serif; }
svg { display: block; flex: none; }
.defs { position: absolute; }
.app { display: grid; grid-template-rows: 26px 37px 28px 936px 4px; width: 1375px; height: 1031px; overflow: hidden; }
.titlebar { display: flex; justify-content: flex-end; background: #fff; }

.quickbar { display: flex; align-items: center; padding-left: 8px; background: #d8d8d8; border-bottom: 2px solid #999; white-space: nowrap; overflow: hidden; color: #3a3a3a; }
.qb-file { margin-left: 33px; }
.qb-caret { margin-left: 6px; }
.qb-save { margin-left: 31px; }
.qb-undo { margin-left: 29px; }
.qb-undo + .qb-caret, .qb-redo + .qb-caret { margin-left: 7px; }
.qb-redo { margin-left: 18px; }
.dim { color: #777; }
.qb-chat { margin-left: 915px; }
.user { flex: none; width: 80px; margin-left: 36px; font-size: 13px; letter-spacing: .1px; color: #444; }
.user + .qb-caret { margin-left: 0; }
.help { flex: none; width: 20px; height: 20px; margin-left: 29px; border-radius: 50%; background: #5c5c5c; color: #e5e5e5; font: bold 16px/20px "Liberation Sans", Arial, sans-serif; text-align: center; }

.tabs { display: flex; background: #d8d8d8; border-bottom: 1px solid #999; }
.tab { display: flex; align-items: center; width: 244px; padding-left: 6px; border-right: 2px solid #999; color: #999; font-size: 15px; letter-spacing: .3px; white-space: nowrap; }
.tab.active { width: 249px; padding-left: 12px; background: #ececec; color: #585858; font-size: 15px; font-weight: bold; letter-spacing: -.1px; }
.tab-part { color: #999; align-self: flex-start; margin-top: 3px; }
.active .tab-part { color: #5c5c5c; }
.tab-name { width: 159px; margin: 4px 0 0 13px; }
.active .tab-name { width: 159.5px; margin-left: 12.5px; }
.ring { width: 11px; height: 11px; margin-right: 11px; border: 2px solid #85cdbd; border-radius: 50%; }

.stage { display: grid; }
.scene, .ui { grid-area: 1 / 1; }
.scene { font-family: "Liberation Sans", Arial, sans-serif; }
.ui { display: flex; flex-direction: column; padding-top: 5px; }

.toolbar { display: flex; width: 1352px; height: 75px; background: #ddd; }
.workspace { display: flex; align-items: center; width: 128px; padding: 2px 0 0 6px; background: #acacac; color: #fff; font-weight: bold; font-size: 13px; letter-spacing: .15px; white-space: nowrap; }
.workspace .grip { width: 7px; height: 29px; margin: -4px 10px 0 0; border: solid #8b8b8b; border-width: 0 1.5px; }
.workspace span { width: 86px; }
.workspace svg { margin-top: -3px; }
.group { display: flex; flex-direction: column; align-items: center; padding-top: 6px; background: linear-gradient(#c5c5c5, #c5c5c5) right 6px / 2px 63px no-repeat; }
.label { display: flex; align-items: center; gap: 2px; height: 18px; font-size: 13px; letter-spacing: -.25px; color: #484848; white-space: nowrap; }
.label svg { color: #333; margin-top: -2px; }
.study { width: 79px; padding-right: 10px; }
.study > svg { margin-left: 8px; }
.material { width: 105px; padding-right: 4px; }
.constraint { width: 118px; }
.load { width: 73px; }
.contacts { width: 112px; padding-right: 2px; }
.display { width: 115px; padding-right: 5px; }
.display > svg { margin-left: 4px; }
.solve { width: 169px; padding-right: 6px; }
.manage { width: 92px; }
.results { width: 99px; padding-right: 2px; }
.results > svg { margin-left: 5px; }
.inspect { width: 93px; padding-right: 2px; }
.select { width: 169px; padding-right: 8px; background: none; }
.select > svg { margin-left: 4px; }

.middle { display: flex; justify-content: space-between; height: 820px; padding-top: 5px; }
.browser { width: 374px; }
.panel-head { display: flex; align-items: center; width: 374px; height: 31px; border: 1px solid #a5a5a5; border-width: 1.5px 1.5px 1.5px 0; background: #d1d1d1; color: #666; }
.panel-head span { font-size: 13.5px; letter-spacing: -.5px; }
.collapse { margin: 0 13px 0 6px; }
.badge { margin-left: auto; }
.handle { width: 4px; height: 14px; margin: 0 1px 0 9px; border: solid #888; border-width: 0 1px; }
.tree { margin: 4px 0 0; padding: 0; list-style: none; }
.tree li { display: flex; align-items: center; height: 30px; }
.l0 { padding-left: 19px; }
.l1 { padding-left: 42px; }
.l2 { padding-left: 64px; }
.l3 { padding-left: 86px; }
.toggle { width: 25px; flex: none; }
.chip { display: flex; align-items: center; gap: 10.5px; height: 25px; padding: 0 11.5px 0 4px; background: #cbcbcb; white-space: nowrap; }
.chip b { margin-left: 7px; font-weight: normal; letter-spacing: .12px; }
.material-chip { width: 163px; }
.chip.material-chip b { letter-spacing: -.1px; }
.chip.dark { background: #858585; color: #fff; box-shadow: inset 0 0 0 2px #aaa; }
.chip.dark b { font-weight: bold; letter-spacing: .35px; }
.chip.case { width: 159px; }
.chip.case b { margin-left: 3px; }
.radio { display: flex; align-items: center; width: 31px; height: 25px; padding-left: 4px; background: #b3d3ff; }
.result-icon { width: 31px; }
.chip.result { width: 66px; padding: 0 0 0 10px; background: #6793bb; color: #fff; }

.plot-controls { display: flex; flex-direction: column; align-items: flex-start; gap: 10px; width: 120px; margin: 164px 274px 0 0; }
.plot-controls button { display: flex; align-items: center; justify-content: space-between; height: 27.5px; padding: 0 5px 0 11px; border: 0; border-radius: 1px; background: #cbcbcb; color: #484848; font: 13px "Liberation Sans", Arial, sans-serif; letter-spacing: .1px; white-space: nowrap; }
.plot-controls button svg { color: #333; }
.plot-controls .w101 { width: 101px; padding-right: 3px; }
.plot-controls .w101:first-child { padding-right: 7px; }
.plot-controls .w120 { width: 120px; }
.plot-controls .w51 { width: 51px; padding-right: 2px; letter-spacing: -.4px; }
.plot-tools { display: flex; align-items: center; gap: 22px; width: 77px; height: 28px; padding-left: 7px; background: #cbcbcb; }

.bottom { display: flex; align-items: flex-start; }
.comments { padding-left: 33px; }
.nav { margin: 1px 0 0 195px; background: #c9c9c9; }
.nav.second { margin-left: 9px; }
.edge { background: #000; padding-left: 357px; }
.edge i { display: block; width: 61px; height: 4px; background: #444; }
```
